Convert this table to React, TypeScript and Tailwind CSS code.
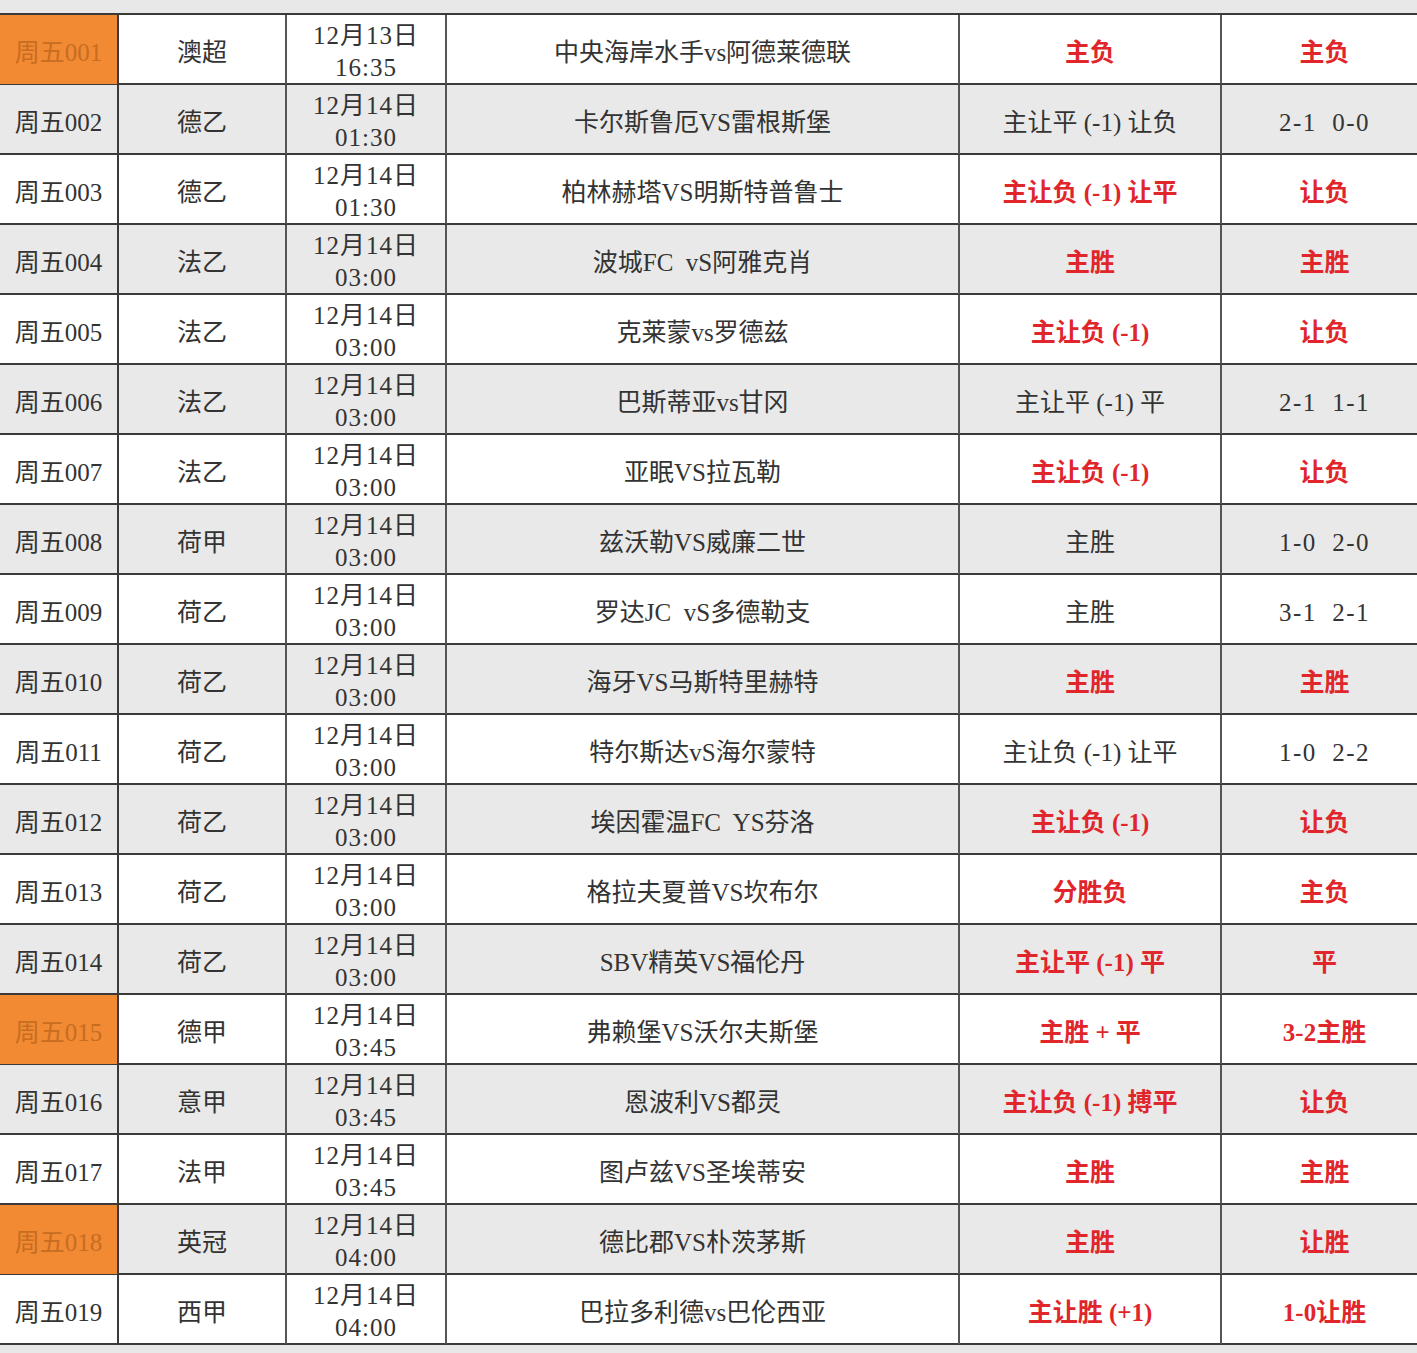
import React from "react";

type Row = {
  id: string;
  league: string;
  date: string;
  time: string;
  match: string;
  pick: string;
  result: string;
  red: boolean;
  orange?: boolean;
};

const rows: Row[] = [
  { id: "周五001", league: "澳超", date: "12月13日", time: "16:35", match: "中央海岸水手vs阿德莱德联", pick: "主负", result: "主负", red: true, orange: true },
  { id: "周五002", league: "德乙", date: "12月14日", time: "01:30", match: "卡尔斯鲁厄VS雷根斯堡", pick: "主让平 (-1) 让负", result: "2-1  0-0", red: false },
  { id: "周五003", league: "德乙", date: "12月14日", time: "01:30", match: "柏林赫塔VS明斯特普鲁士", pick: "主让负 (-1) 让平", result: "让负", red: true },
  { id: "周五004", league: "法乙", date: "12月14日", time: "03:00", match: "波城FC  vS阿雅克肖", pick: "主胜", result: "主胜", red: true },
  { id: "周五005", league: "法乙", date: "12月14日", time: "03:00", match: "克莱蒙vs罗德兹", pick: "主让负 (-1)", result: "让负", red: true },
  { id: "周五006", league: "法乙", date: "12月14日", time: "03:00", match: "巴斯蒂亚vs甘冈", pick: "主让平 (-1) 平", result: "2-1  1-1", red: false },
  { id: "周五007", league: "法乙", date: "12月14日", time: "03:00", match: "亚眠VS拉瓦勒", pick: "主让负 (-1)", result: "让负", red: true },
  { id: "周五008", league: "荷甲", date: "12月14日", time: "03:00", match: "兹沃勒VS威廉二世", pick: "主胜", result: "1-0  2-0", red: false },
  { id: "周五009", league: "荷乙", date: "12月14日", time: "03:00", match: "罗达JC  vS多德勒支", pick: "主胜", result: "3-1  2-1", red: false },
  { id: "周五010", league: "荷乙", date: "12月14日", time: "03:00", match: "海牙VS马斯特里赫特", pick: "主胜", result: "主胜", red: true },
  { id: "周五011", league: "荷乙", date: "12月14日", time: "03:00", match: "特尔斯达vS海尔蒙特", pick: "主让负 (-1) 让平", result: "1-0  2-2", red: false },
  { id: "周五012", league: "荷乙", date: "12月14日", time: "03:00", match: "埃因霍温FC  YS芬洛", pick: "主让负 (-1)", result: "让负", red: true },
  { id: "周五013", league: "荷乙", date: "12月14日", time: "03:00", match: "格拉夫夏普VS坎布尔", pick: "分胜负", result: "主负", red: true },
  { id: "周五014", league: "荷乙", date: "12月14日", time: "03:00", match: "SBV精英VS福伦丹", pick: "主让平 (-1) 平", result: "平", red: true },
  { id: "周五015", league: "德甲", date: "12月14日", time: "03:45", match: "弗赖堡VS沃尔夫斯堡", pick: "主胜 + 平", result: "3-2主胜", red: true, orange: true },
  { id: "周五016", league: "意甲", date: "12月14日", time: "03:45", match: "恩波利VS都灵", pick: "主让负 (-1) 搏平", result: "让负", red: true },
  { id: "周五017", league: "法甲", date: "12月14日", time: "03:45", match: "图卢兹VS圣埃蒂安", pick: "主胜", result: "主胜", red: true },
  { id: "周五018", league: "英冠", date: "12月14日", time: "04:00", match: "德比郡VS朴茨茅斯", pick: "主胜", result: "让胜", red: true, orange: true },
  { id: "周五019", league: "西甲", date: "12月14日", time: "04:00", match: "巴拉多利德vs巴伦西亚", pick: "主让胜 (+1)", result: "1-0让胜", red: true },
];

export default function App() {
  return (
    <div
      className="w-[1417px] h-[1353px] bg-[#e8e8e8] overflow-hidden text-[25px] text-[#333333]"
      style={{ fontFamily: '"Liberation Serif", "Noto Sans CJK SC", serif' }}
    >
      <div className="h-[15px] bg-[#e8e8e8] border-b-2 border-[#3a3a3a]" />
      {rows.map((r, i) => {
        const gray = i % 2 === 1;
        const bg = gray ? "bg-[#e9e9e9]" : "bg-white";
        const resCls = r.red ? "text-[#e0262b] font-bold" : "text-[#333333]";
        const isScore = !r.red;
        return (
          <div
            key={r.id}
            className={`grid grid-cols-[119px_168px_160px_513px_262px_195px] h-[70px] border-b-2 border-[#3a3a3a] ${bg}`}
          >
            <div
              className={`flex items-center justify-center border-r-2 border-[#3a3a3a] pt-[6px] ${
                r.orange ? "bg-[#f28a33] text-[#c66d22]" : ""
              }`}
            >
              {r.id}
            </div>
            <div className="flex items-center justify-center border-r-2 border-[#555555] pt-[6px]">
              {r.league}
            </div>
            <div className="flex flex-col items-center justify-center border-r-2 border-[#555555] leading-[32px] pt-[5px] tracking-[1px]">
              <span>{r.date}</span>
              <span>{r.time}</span>
            </div>
            <div className="flex items-center justify-center whitespace-pre border-r-2 border-[#555555] pt-[6px]">
              {r.match}
            </div>
            <div className={`flex items-center justify-center whitespace-pre border-r-2 border-[#555555] pt-[6px] ${resCls}`}>
              {r.pick}
            </div>
            <div
              className={`flex items-center justify-center whitespace-pre pt-[6px] pl-[10px] ${resCls} ${
                isScore ? "tracking-[1.5px]" : ""
              }`}
            >
              {r.result}
            </div>
          </div>
        );
      })}
    </div>
  );
}
